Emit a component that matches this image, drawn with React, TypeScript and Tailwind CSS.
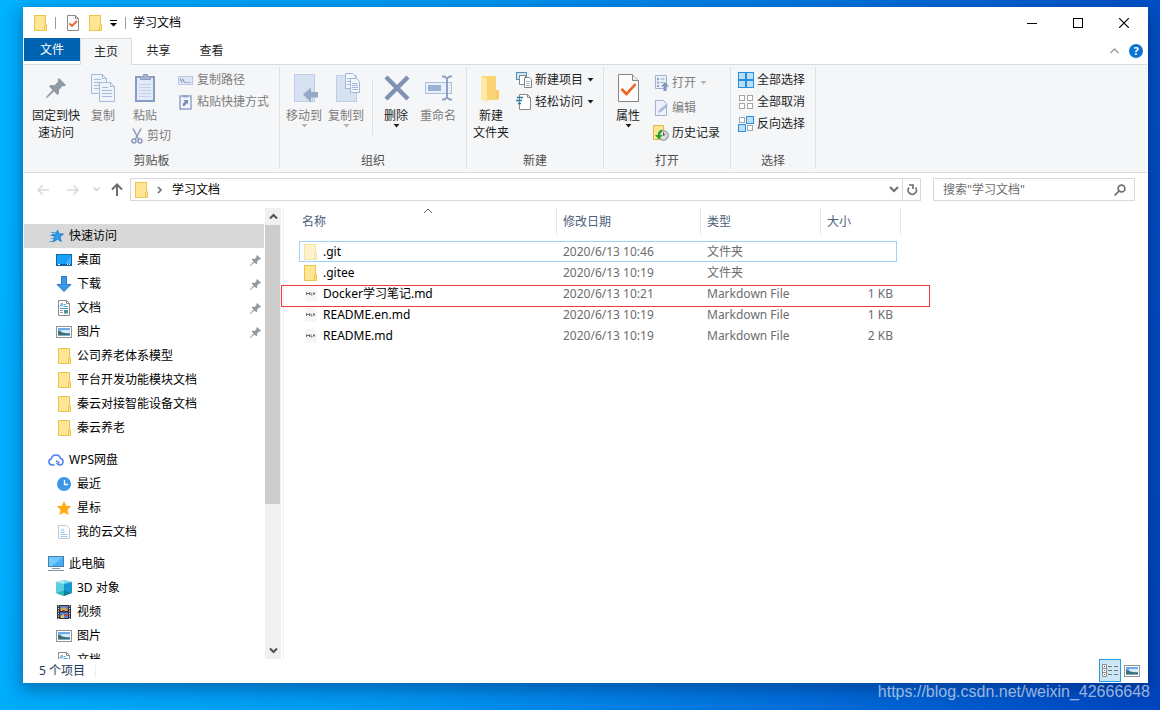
import { useState } from "react";
import type { ReactNode } from "react";

/* ---------- Icons ---------- */

function FolderIcon({ faded = false }: { faded?: boolean }) {
  return (
    <svg width="16" height="16" viewBox="0 0 16 16" className={faded ? "shrink-0 opacity-50" : "shrink-0"}>
      <rect x="2.5" y="0.5" width="11" height="15" fill="#ffe594" stroke="#eac54f" />
      <path d="M12.5 15.5v-4.8l1-1h1v5.8z" fill="#ffe48f" stroke="#eac54f" />
    </svg>
  );
}

function CheckDocIcon() {
  return (
    <svg width="16" height="16" viewBox="0 0 16 16">
      <path d="M2.5 .5h8l3 3v12h-11z" fill="#fbfbfb" stroke="#8a8a8a" />
      <path d="M10.500 .5v3h3" fill="none" stroke="#8a8a8a" />
      <path d="M4.500 8.500l2.500 2.500 5-5" fill="none" stroke="#e8622c" strokeWidth="1.800" />
    </svg>
  );
}

function PinIcon({ size }: { size: number }) {
  return (
    <svg width={size} height={size} viewBox="0 0 20 20" fill="#8f9aa3" className="shrink-0">
      <path d="M13 0l7 7-2 1.500-1.500-.5-3.500 4v3.500L11.500 17 8 13.500 1.500 19.500.5 20 0 19l6.500-7L3 8.500 4.500 7l4 .2L12 3.700l-.3-2z" />
    </svg>
  );
}

function Caret({ dim = false }: { dim?: boolean }) {
  return (
    <svg width="7" height="4" viewBox="0 0 7 4" fill={dim ? "#b4b4b4" : "#1e1e1e"} className="shrink-0">
      <path d="M.5 0h6l-3 3.500z" />
    </svg>
  );
}

function CopyIcon() {
  return (
    <svg width="26" height="30" viewBox="0 0 26 30" fill="#eef3fb" stroke="#a9bbd8">
      <path d="M1.500 1.500h11l4 4v15h-15z" />
      <path d="M12.500 1.500v4h4M4 6.500h7M4 9.500h9M4 12.500h6M4 15.500h5" fill="none" />
      <path d="M9.500 9.500h11l4 4v15h-15z" />
      <path d="M20.500 9.500v4h4M12 14.500h6M12 17.500h10M12 20.500h10M12 23.500h10" fill="none" />
    </svg>
  );
}

function PasteIcon() {
  return (
    <svg width="22" height="30" viewBox="0 0 22 30">
      <rect x="2" y="4" width="18" height="24" fill="#e3ebf8" stroke="#879cc3" strokeWidth="2" />
      <path d="M6.500 6.500v-3h3V1.500h4v2h3v3z" fill="#a7b4cf" stroke="#8c9dbd" />
      <path d="M5 11.500h12M5 14.500h12M5 17.500h12M5 20.500h12M5 23.500h12" stroke="#c3d2ea" />
    </svg>
  );
}

function ScissorsIcon() {
  return (
    <svg width="12" height="16" viewBox="0 0 12 16" fill="none" stroke="#8b9cba" strokeWidth="1.600">
      <path d="M2 .5l5.500 10.500M10 .5L4.500 11" />
      <circle cx="3" cy="13" r="2" />
      <circle cx="9" cy="13" r="2" />
    </svg>
  );
}

function PathIcon() {
  return (
    <svg width="16" height="16" viewBox="0 0 16 16">
      <rect x=".5" y="4.500" width="14" height="8" fill="#dce6f5" stroke="#b9c9e2" />
      <path d="M2 6.500l2 4M4.500 6.500l2 4" stroke="#6d82a8" />
      <path d="M7.500 10.500h1M9.500 10.500h1M11.500 10.500h1" stroke="#6d82a8" />
    </svg>
  );
}

function PasteShortcutIcon() {
  return (
    <svg width="16" height="16" viewBox="0 0 16 16">
      <rect x="2" y="2" width="11" height="13" fill="#f1f5fb" stroke="#91a5c8" strokeWidth="1.500" />
      <path d="M5 3V1.500h5V3z" fill="#91a5c8" stroke="#91a5c8" />
      <path d="M5 12V9.500l2-2L5.500 6H10v4.500L8.700 9 6.500 12z" fill="#7289b5" />
    </svg>
  );
}

function MoveToIcon() {
  return (
    <svg width="28" height="30" viewBox="0 0 28 30">
      <path d="M4.500 1.500h20v27h-20z" fill="#d6e2f2" stroke="#bccde5" />
      <path d="M22.500 18v10.500h2V18" fill="#e7effa" stroke="#bccde5" />
      <path d="M13 21.500l8-7v4.500h8v5.500h-8v5z" fill="#97a9c9" />
    </svg>
  );
}

function CopyToIcon() {
  return (
    <svg width="28" height="30" viewBox="0 0 28 30">
      <path d="M4.500 2.500h20v26h-20z" fill="#d6e2f2" stroke="#bccde5" />
      <g fill="#f3f7fc" stroke="#a3b6d4">
        <path d="M13.500 .5h7l3 3v12h-10z" />
        <path d="M15 5.500h4M15 8.500h3M15 11.500h3" />
        <path d="M18.500 5.500h6l3 3v11h-9z" />
        <path d="M20 10.500h6M20 12.500h6M20 14.500h6M20 16.500h6" />
      </g>
    </svg>
  );
}

function DeleteIcon() {
  return (
    <svg width="28" height="30" viewBox="0 0 28 30" stroke="#8092b3" strokeWidth="4.500">
      <path d="M4 4l22 22M26 4L4 26" />
    </svg>
  );
}

function RenameIcon() {
  return (
    <svg width="28" height="30" viewBox="0 0 28 30">
      <rect x="1.500" y="9.500" width="26" height="11" fill="#e8f0fb" stroke="#a9bddc" />
      <rect x="4" y="12" width="13" height="6" fill="#9cb0d1" />
      <path d="M18 3.500h2.500l2.500 2 2.500-2H28M18 26.500h2.500l2.500-2 2.500 2H28M23 5v20" fill="none" stroke="#8ea2c5" strokeWidth="2" />
    </svg>
  );
}

function NewFolderIcon() {
  return (
    <svg width="22" height="30" viewBox="0 0 22 30">
      <path d="M1 3h15v15h2v9H7z" fill="#fbd574" />
      <path d="M1 3l6 3v24l-6-4z" fill="#ffe9a8" />
      <path d="M16 17h3v9h-3z" fill="#f8cd63" />
    </svg>
  );
}

function NewItemIcon() {
  return (
    <svg width="16" height="16" viewBox="0 0 16 16">
      <rect x=".5" y=".5" width="10" height="7" fill="#cfe6f5" stroke="#4f8fb5" />
      <path d="M3.500 3.500h6v9h-6z" fill="#fff" stroke="#868686" />
      <path d="M8.500 5.500h5l2 2v8h-7z" fill="#fff" stroke="#868686" />
      <path d="M10 9.500h4M10 11.500h4M10 13.500h4" stroke="#9fb8cf" />
    </svg>
  );
}

function EasyAccessIcon() {
  return (
    <svg width="16" height="16" viewBox="0 0 16 16">
      <path d="M3.500 .5h8l3 3v12h-11z" fill="#fff" stroke="#8a8a8a" />
      <path d="M11.500 .5v3h3" fill="none" stroke="#8a8a8a" />
      <path d="M1 3.500h6M0 6.500h6M2 9.500h3" stroke="#2f76ab" strokeWidth="1.300" />
    </svg>
  );
}

function PropertiesIcon() {
  return (
    <svg width="22" height="30" viewBox="0 0 22 30">
      <path d="M1.500 1.500h14l6 6v21h-20z" fill="#fcfcfc" stroke="#858585" />
      <path d="M15.500 1.500v6h6" fill="#ececec" stroke="#858585" />
      <path d="M4.500 16l5 5 9-10" fill="none" stroke="#f0601e" strokeWidth="2.600" />
    </svg>
  );
}

function OpenIcon() {
  return (
    <svg width="16" height="16" viewBox="0 0 16 16">
      <path d="M2.500 .5h11v13h-11z" fill="#edf2fa" stroke="#9fb2d0" />
      <path d="M4 3h2v2H4zM4 6.500h2v2H4zM4 10h2v2H4z" fill="#8ea3c6" />
      <path d="M7.500 4h4M7.500 7.500h3" stroke="#8ea3c6" />
      <path d="M12 7l4 4.500h-2.500V16h-3v-4.500H8z" fill="#8196bd" />
    </svg>
  );
}

function EditIcon() {
  return (
    <svg width="16" height="16" viewBox="0 0 16 16">
      <path d="M2.500 .5h8l3 3v12h-11z" fill="#edf2fa" stroke="#9fb2d0" />
      <path d="M5 13l1-3 7-6 2 2-7 6z" fill="#a9bbda" />
    </svg>
  );
}

function HistoryIcon() {
  return (
    <svg width="16" height="16" viewBox="0 0 16 16">
      <path d="M.5 .5h10v14H.5z" fill="#ffe594" stroke="#e0b73c" />
      <circle cx="10.500" cy="10.500" r="4.800" fill="#dedede" stroke="#808080" />
      <path d="M10.500 7.500v3l2-1.500M8 10.500h1M13 12.500l-.5-.5" fill="none" stroke="#555" />
      <path d="M9 4.500C6 5 4.500 7.500 4.800 10H2l4 4.500L9.500 10H7.200C7 8.500 7.800 7.500 9 7z" fill="#27a327" />
    </svg>
  );
}

// Four tiles; each entry tells whether that tile is filled
function TilesIcon({ filled }: { filled: boolean[] }) {
  const spots = [
    [0.5, 0.5],
    [8.5, 0.5],
    [0.5, 8.5],
    [8.5, 8.5],
  ];
  return (
    <svg width="16" height="16" viewBox="0 0 16 16">
      {spots.map(([x, y], i) =>
        filled[i] ? (
          <rect key={i} x={x} y={y} width="7" height="7" fill="#b9def7" stroke="#2c8ee0" />
        ) : (
          <rect key={i} x={x + 1} y={y + 1} width="5" height="5" fill="#fff" stroke="#a5a5a5" />
        ),
      )}
    </svg>
  );
}

function QuickStarIcon() {
  return (
    <svg width="16" height="16" viewBox="0 0 16 16">
      <path d="M3 4.500h5M2 7.500h5M3 10.500h4M1.500 13.500h4" stroke="#4aa3df" />
      <path d="M9.500 2l1.500 3.800 4.500.2-3.500 2.900 1.400 4.600-4-2.200L5 14l1.500-4.600L4 6.300l4-.3z" fill="#2f9ae8" stroke="#1878c4" strokeWidth=".8" />
    </svg>
  );
}

function DesktopIcon() {
  return (
    <svg width="16" height="16" viewBox="0 0 16 16">
      <rect x=".5" y="2.500" width="15" height="11" fill="#18a0fb" stroke="#0d68b0" />
      <path d="M9 13L15 4v9z" fill="#45b4ff" />
      <path d="M1 12.500h14" stroke="#0d5b9e" />
      <path d="M2 12.500h2M11 12.500h1M13 12.500h1" stroke="#fff" />
    </svg>
  );
}

function DownloadIcon() {
  return (
    <svg width="16" height="16" viewBox="0 0 16 16">
      <path d="M5.500 .5h5v8h4.500L8 15.500 1 8.500h4.500z" fill="#3b97e8" stroke="#2a79c2" />
    </svg>
  );
}

function DocumentIcon() {
  return (
    <svg width="16" height="16" viewBox="0 0 16 16">
      <path d="M2.500 .5h8l3 3v12h-11z" fill="#fff" stroke="#8a8a8a" />
      <path d="M10.500 .5v3h3" fill="none" stroke="#8a8a8a" />
      <path d="M4 6.500l2-3.500v3.500M7.500 4.500h2M7.500 6.500h4M4 8.500h8" fill="none" stroke="#3b9ad2" />
      <path d="M4 10.500h3M4 12.500h3" stroke="#9a9a9a" />
      <path d="M8 10h4v3.500H8z" fill="#4f8f9a" />
    </svg>
  );
}

function PictureIcon() {
  return (
    <svg width="16" height="16" viewBox="0 0 16 16">
      <rect x=".5" y="2.500" width="15" height="11" fill="#fff" stroke="#949494" />
      <path d="M2 4h12v8H2z" fill="#6fa9ee" />
      <path d="M5 6h9v3H5z" fill="#d5e9f8" />
      <path d="M2 7c3 .5 5 2.500 12 2.500V12H2z" fill="#3f6f6c" />
      <path d="M2 11h12v1H2z" fill="#7fa9c8" />
    </svg>
  );
}

function CloudIcon() {
  return (
    <svg width="16" height="16" viewBox="0 0 16 16" fill="none" stroke="#4a7df0" strokeWidth="1.500">
      <path d="M6.500 13H4a3.200 3.200 0 0 1-.6-6.300A4.700 4.700 0 0 1 12.500 6.500 3.300 3.300 0 0 1 12 13c-2 0-2.500-1-3.500-2" />
      <path d="M8 9.500c1.500-.5 3 .5 3 2" />
    </svg>
  );
}

function ClockIcon() {
  return (
    <svg width="16" height="16" viewBox="0 0 16 16">
      <circle cx="8" cy="8" r="7" fill="#3c97e8" />
      <path d="M8.500 4v4.500H12" fill="none" stroke="#fff" strokeWidth="1.300" />
    </svg>
  );
}

function StarIcon() {
  return (
    <svg width="16" height="16" viewBox="0 0 16 16">
      <path d="M8 1l2.200 4.700 5 .6-3.700 3.500 1 5.200L8 12.500 3.500 15l1-5.200L.8 6.300l5-.6z" fill="#ffac13" />
    </svg>
  );
}

function CloudDocIcon() {
  return (
    <svg width="16" height="16" viewBox="0 0 16 16">
      <path d="M2.500 1.500h8l3 3v10h-11z" fill="#fff" stroke="#c4c8cc" />
      <path d="M5 7.500l1.500-3 1.500 3M4.500 8.500h4M4.500 10.500h7M4.500 12.500h7" fill="none" stroke="#9cc8f2" />
    </svg>
  );
}

function ComputerIcon() {
  return (
    <svg width="16" height="16" viewBox="0 0 16 16">
      <rect x=".5" y=".5" width="15" height="10" fill="#45aef5" stroke="#4380ab" />
      <path d="M1 1h14L4 10H1z" fill="#74c6fb" />
      <path d="M4 12.500h8M0 14.500h16" stroke="#8293a8" />
    </svg>
  );
}

function CubeIcon() {
  return (
    <svg width="16" height="16" viewBox="0 0 16 16">
      <path d="M0 2l8-2 8 2v11l-8 3-8-3z" fill="#59cfdd" />
      <path d="M0 2l8-2v4z" fill="#a9eaee" />
      <path d="M8 0l8 2-8 2z" fill="#7ddbe4" />
      <path d="M8 4l8-2v11l-8-2.500z" fill="#1599d3" />
      <path d="M8 10.500l8 2.500-8 3z" fill="#0d7f96" />
      <path d="M0 13l8-2.500V16z" fill="#2fb4b8" />
    </svg>
  );
}

function VideoIcon() {
  return (
    <svg width="16" height="16" viewBox="0 0 16 16">
      <path d="M1 1h14v14H1z" fill="#353535" />
      <path d="M4 2h8v5H4zM4 8.500h8v5.500H4z" fill="#527fe0" />
      <path d="M5 4l3-1 3 2v2H5z" fill="#d8a63b" />
      <path d="M6 6h3v1H6zM8 10h3v2H8z" fill="#cd4631" />
      <path d="M5 12l3-2v4H5z" fill="#e4c149" />
      <path d="M2.500 1.500v14M13.500 1.500v14" stroke="#e9e9e9" strokeDasharray="1.200 1.300" />
    </svg>
  );
}

function MarkdownIcon() {
  return (
    <svg width="16" height="16" viewBox="0 0 16 16" className="shrink-0">
      <path d="M3 1h9l3 3v11H3z" fill="#f6f6f6" />
      <path d="M4.500 9V6.500L6 8l1.500-1.500V9M9 6.500V9h1.500M12 6v3M11 7.500h2" fill="none" stroke="#707070" />
    </svg>
  );
}

/* ---------- Ribbon ---------- */

function RibbonGroup({ title, className, children }: { title: string; className: string; children: ReactNode }) {
  return (
    <section className="flex h-[102px] shrink-0 flex-col border-r border-[#e0e1e3]">
      <div className={`flex flex-1 ${className}`}>{children}</div>
      <h2 className="text-center leading-[17px] text-[#505050]">{title}</h2>
    </section>
  );
}

interface BigButtonProps {
  icon: ReactNode;
  lines: string[];
  caret?: boolean;
  dim?: boolean;
  className?: string;
}

function BigButton({ icon, lines, caret, dim, className = "w-[42px]" }: BigButtonProps) {
  return (
    <button
      type="button"
      className={`flex shrink-0 flex-col items-center self-start pt-[6px] leading-[17px] whitespace-nowrap ${className} ${
        dim ? "text-[#7d7d7d]" : "text-[#1e1e1e]"
      }`}
    >
      <span className="flex h-[30px] items-center justify-center">{icon}</span>
      <span className="mt-1 flex flex-col">
        {lines.map((line) => (
          <span key={line}>{line}</span>
        ))}
      </span>
      {caret && <Caret dim={dim} />}
    </button>
  );
}

interface SmallButtonProps {
  icon: ReactNode;
  label: string;
  caret?: boolean;
  dim?: boolean;
  className?: string;
}

function SmallButton({ icon, label, caret, dim, className = "h-[22px] gap-[3px]" }: SmallButtonProps) {
  return (
    <button
      type="button"
      className={`flex items-center whitespace-nowrap ${className} ${dim ? "text-[#7d7d7d]" : "text-[#1e1e1e]"}`}
    >
      {icon}
      <span>{label}</span>
      {caret && (
        <span className="pl-px">
          <Caret dim={dim} />
        </span>
      )}
    </button>
  );
}

function Ribbon() {
  return (
    <div className="flex overflow-hidden border-b border-[#dadbdc] bg-[#f5f6f7] pt-[2px] pb-[3px]">
      <RibbonGroup title="剪贴板" className="w-[255px] pl-[6px]">
        <BigButton icon={<PinIcon size={20} />} lines={["固定到快", "速访问"]} className="w-[52px] text-center" />
        <BigButton icon={<CopyIcon />} lines={["复制"]} dim />
        <div className="ml-[7px] w-[47px]">
          <BigButton icon={<PasteIcon />} lines={["粘贴"]} dim className="w-7" />
          <SmallButton icon={<ScissorsIcon />} label="剪切" dim className="h-6 gap-1" />
        </div>
        <div className="pt-[2px]">
          <SmallButton icon={<PathIcon />} label="复制路径" dim />
          <SmallButton icon={<PasteShortcutIcon />} label="粘贴快捷方式" dim />
        </div>
      </RibbonGroup>

      <RibbonGroup title="组织" className="w-[186px] pl-[3px]">
        <BigButton icon={<MoveToIcon />} lines={["移动到"]} caret dim />
        <BigButton icon={<CopyToIcon />} lines={["复制到"]} caret dim />
        <div className="mt-[13px] mr-[2px] ml-[5px] h-[55px] w-px bg-[#e0e1e3]" />
        <BigButton icon={<DeleteIcon />} lines={["删除"]} caret />
        <BigButton icon={<RenameIcon />} lines={["重命名"]} dim />
      </RibbonGroup>

      <RibbonGroup title="新建" className="w-[136px] pl-[3px]">
        <BigButton icon={<NewFolderIcon />} lines={["新建", "文件夹"]} className="w-[42px] text-center" />
        <div className="ml-1 pt-[2px]">
          <SmallButton icon={<NewItemIcon />} label="新建项目" caret />
          <SmallButton icon={<EasyAccessIcon />} label="轻松访问" caret />
        </div>
      </RibbonGroup>

      <RibbonGroup title="打开" className="w-[126px] pl-[3px]">
        <BigButton icon={<PropertiesIcon />} lines={["属性"]} caret />
        <div className="ml-1 pt-[3px]">
          <SmallButton icon={<OpenIcon />} label="打开" caret dim className="h-[25px] gap-[3px]" />
          <SmallButton icon={<EditIcon />} label="编辑" dim className="h-[25px] gap-[3px]" />
          <SmallButton icon={<HistoryIcon />} label="历史记录" className="h-[25px] gap-[3px]" />
        </div>
      </RibbonGroup>

      <RibbonGroup title="选择" className="w-[84px] pl-[7px]">
        <div className="pt-[2px]">
          <SmallButton icon={<TilesIcon filled={[true, true, true, true]} />} label="全部选择" />
          <SmallButton icon={<TilesIcon filled={[false, false, false, false]} />} label="全部取消" />
          <SmallButton icon={<TilesIcon filled={[false, true, true, false]} />} label="反向选择" />
        </div>
      </RibbonGroup>
    </div>
  );
}

/* ---------- Title bar, tabs, address ---------- */

function TitleBar() {
  return (
    <header className="flex h-[30px] shrink-0 items-center pl-2">
      <FolderIcon />
      <span className="ml-[7px] h-3 w-px bg-[#9a9a9a]" />
      <button type="button" aria-label="属性" className="ml-[9px]">
        <CheckDocIcon />
      </button>
      <button type="button" aria-label="新建文件夹" className="ml-[6px]">
        <FolderIcon />
      </button>
      <button type="button" aria-label="自定义快速访问工具栏" className="ml-[7px]">
        <svg width="7" height="8" viewBox="0 0 7 8">
          <path d="M0 1.500h7" stroke="#000" />
          <path d="M0 4h7L3.500 7.500z" />
        </svg>
      </button>
      <span className="ml-2 h-3 w-px bg-[#9a9a9a]" />
      <h1 className="ml-[7px] flex-1 text-black">学习文档</h1>
      <button type="button" aria-label="最小化" className="flex h-full w-[46px] items-center justify-center">
        <svg width="10" height="10" viewBox="0 0 10 10" stroke="#000">
          <path d="M0 5.500h10" />
        </svg>
      </button>
      <button type="button" aria-label="最大化" className="flex h-full w-[46px] items-center justify-center">
        <svg width="10" height="10" viewBox="0 0 10 10" fill="none" stroke="#000">
          <rect x=".5" y=".5" width="9" height="9" />
        </svg>
      </button>
      <button type="button" aria-label="关闭" className="flex h-full w-[46px] items-center justify-center">
        <svg width="10" height="10" viewBox="0 0 10 10" stroke="#000" strokeWidth="1.200">
          <path d="M0 0l10 10M10 0L0 10" />
        </svg>
      </button>
    </header>
  );
}

function TabBar() {
  return (
    <div className="flex h-[27px] shrink-0 items-stretch border-b border-[#dadbdc]">
      <button type="button" className="h-[23px] w-14 bg-[#0063b1] text-white">
        文件
      </button>
      <button type="button" className="-mb-px w-[52px] border border-b-0 border-[#dadbdc] bg-[#f5f6f7] text-[#262626]">
        主页
      </button>
      <button type="button" className="w-[53px] text-[#262626]">
        共享
      </button>
      <button type="button" className="w-[53px] text-[#262626]">
        查看
      </button>
      <div className="flex flex-1 items-center justify-end gap-[10px] pr-1">
        <button type="button" aria-label="最小化功能区">
          <svg width="9" height="6" viewBox="0 0 9 6" fill="none" stroke="#9a9a9a" strokeWidth="1.300">
            <path d="M.5 5l4-4 4 4" />
          </svg>
        </button>
        <button
          type="button"
          aria-label="帮助"
          className="flex size-[14px] items-center justify-center rounded-full bg-[#0a74d0] text-[11px] font-bold text-white"
        >
          ?
        </button>
      </div>
    </div>
  );
}

function AddressBar() {
  const [query, setQuery] = useState("");

  return (
    <div className="flex h-[35px] shrink-0 items-start pt-[5px] pr-3 pl-3">
      <div className="flex h-[23px] w-[94px] shrink-0 items-center">
        <button type="button" aria-label="后退" className="w-[30px]">
          <svg width="14" height="12" viewBox="0 0 14 12" fill="none" stroke="#d8d8d8" strokeWidth="1.600">
            <path d="M13 6H2M6.500 1.500L2 6l4.500 4.500" />
          </svg>
        </button>
        <button type="button" aria-label="前进" className="w-[26px]">
          <svg width="14" height="12" viewBox="0 0 14 12" fill="none" stroke="#d8d8d8" strokeWidth="1.600">
            <path d="M1 6h11M7.500 1.500L12 6l-4.500 4.500" />
          </svg>
        </button>
        <button type="button" aria-label="最近浏览的位置" className="w-[18px]">
          <svg width="7" height="5" viewBox="0 0 7 5" fill="none" stroke="#cfcfcf" strokeWidth="1.500" className="ml-px">
            <path d="M.5 .5l3 3 3-3" />
          </svg>
        </button>
        <button type="button" aria-label="上移">
          <svg width="14" height="13" viewBox="0 0 14 13" fill="none" stroke="#6e6e6e" strokeWidth="2">
            <path d="M7 13V2M2 6.500l5-5 5 5" />
          </svg>
        </button>
      </div>

      <div className="flex h-[23px] flex-1 items-center border border-[#d9d9d9] pl-[2px]">
        <FolderIcon />
        <svg width="6" height="8" viewBox="0 0 6 8" fill="none" stroke="#6a6a6a" strokeWidth="1.600" className="ml-2">
          <path d="M1 1l3 3-3 3" />
        </svg>
        <a href="#docs" className="ml-[9px] flex-1 text-black">
          学习文档
        </a>
        <button type="button" aria-label="以前的位置" className="flex w-4 justify-center">
          <svg width="10" height="7" viewBox="0 0 10 7" fill="none" stroke="#707070" strokeWidth="2">
            <path d="M1 1l4 4 4-4" />
          </svg>
        </button>
        <button type="button" aria-label="刷新" className="flex h-full w-[18px] items-center justify-center border-l border-[#d9d9d9]">
          <svg width="12" height="12" viewBox="0 0 12 12" fill="none" stroke="#6e6e6e" strokeWidth="1.700">
            <path d="M9.500 3.500a4.200 4.200 0 1 1-6.500 0M3 1h4v4" />
          </svg>
        </button>
      </div>

      <div className="ml-3 flex h-[23px] w-[202px] items-center border border-[#d9d9d9] pr-2 pl-[9px]">
        <input
          type="text"
          aria-label="搜索"
          value={query}
          onChange={(e) => setQuery(e.target.value)}
          placeholder={'搜索"学习文档"'}
          className="min-w-0 flex-1 bg-transparent outline-none placeholder:text-[#6d6d6d]"
        />
        <svg width="12" height="12" viewBox="0 0 12 12" fill="none" stroke="#707070" strokeWidth="1.700">
          <circle cx="7.500" cy="4.500" r="3.400" />
          <path d="M5 7L.7 11.300" />
        </svg>
      </div>
    </div>
  );
}

/* ---------- Navigation pane ---------- */

interface NavEntry {
  label: string;
  icon: ReactNode;
  root?: boolean;
  pinned?: boolean;
  selected?: boolean;
}

const NAV_SECTIONS: NavEntry[][] = [
  [
    { label: "快速访问", icon: <QuickStarIcon />, root: true, selected: true },
    { label: "桌面", icon: <DesktopIcon />, pinned: true },
    { label: "下载", icon: <DownloadIcon />, pinned: true },
    { label: "文档", icon: <DocumentIcon />, pinned: true },
    { label: "图片", icon: <PictureIcon />, pinned: true },
    { label: "公司养老体系模型", icon: <FolderIcon /> },
    { label: "平台开发功能模块文档", icon: <FolderIcon /> },
    { label: "秦云对接智能设备文档", icon: <FolderIcon /> },
    { label: "秦云养老", icon: <FolderIcon /> },
  ],
  [
    { label: "WPS网盘", icon: <CloudIcon />, root: true },
    { label: "最近", icon: <ClockIcon /> },
    { label: "星标", icon: <StarIcon /> },
    { label: "我的云文档", icon: <CloudDocIcon /> },
  ],
  [
    { label: "此电脑", icon: <ComputerIcon />, root: true },
    { label: "3D 对象", icon: <CubeIcon /> },
    { label: "视频", icon: <VideoIcon /> },
    { label: "图片", icon: <PictureIcon /> },
    { label: "文档", icon: <DocumentIcon /> },
  ],
];

function NavPane() {
  return (
    <nav className="w-60 shrink-0 overflow-hidden pt-4">
      {NAV_SECTIONS.map((section) => (
        <ul key={section[0].label} className="mb-2">
          {section.map((item) => (
            <li key={item.label}>
              <button
                type="button"
                className={`flex h-6 w-full items-center gap-[5px] pr-[3px] text-left text-black ${
                  item.root ? "pl-6" : "pl-8"
                } ${item.selected ? "bg-[#d9d9d9]" : ""}`}
              >
                {item.icon}
                <span className="flex-1">{item.label}</span>
                {item.pinned && <PinIcon size={11} />}
              </button>
            </li>
          ))}
        </ul>
      ))}
    </nav>
  );
}

function ScrollBar() {
  return (
    <div className="ml-px flex w-4 shrink-0 flex-col bg-[#f0f0f0]">
      <button type="button" aria-label="向上滚动" className="flex h-[17px] items-center justify-center">
        <svg width="9" height="7" viewBox="0 0 9 7" fill="none" stroke="#505050" strokeWidth="2">
          <path d="M1 5.500L4.500 2 8 5.500" />
        </svg>
      </button>
      <div className="flex-1">
        <div className="h-[67%] w-[15px] bg-[#cdcdcd]" />
      </div>
      <button type="button" aria-label="向下滚动" className="flex h-[17px] items-center justify-center">
        <svg width="9" height="7" viewBox="0 0 9 7" fill="none" stroke="#505050" strokeWidth="2">
          <path d="M1 1.500L4.500 5 8 1.500" />
        </svg>
      </button>
    </div>
  );
}

/* ---------- File list ---------- */

interface FileEntry {
  name: string;
  date: string;
  type: string;
  size: string;
  kind: "hidden" | "folder" | "markdown";
  marked?: boolean;
}

const FILES: FileEntry[] = [
  { name: ".git", date: "2020/6/13 10:46", type: "文件夹", size: "", kind: "hidden" },
  { name: ".gitee", date: "2020/6/13 10:19", type: "文件夹", size: "", kind: "folder" },
  { name: "Docker学习笔记.md", date: "2020/6/13 10:21", type: "Markdown File", size: "1 KB", kind: "markdown", marked: true },
  { name: "README.en.md", date: "2020/6/13 10:19", type: "Markdown File", size: "1 KB", kind: "markdown" },
  { name: "README.md", date: "2020/6/13 10:19", type: "Markdown File", size: "2 KB", kind: "markdown" },
];

function FileTable() {
  return (
    <table className="w-[598px] table-fixed border-separate border-spacing-0 text-left">
      <colgroup>
        <col />
        <col className="w-36" />
        <col className="w-[120px]" />
        <col className="w-[76px]" />
      </colgroup>
      <thead>
        <tr className="h-[27px] text-[#4c607a]">
          <th scope="col" className="relative border-r border-[#e5e5e5] pl-[3px] font-normal">
            名称
            <svg
              width="9"
              height="6"
              viewBox="0 0 9 6"
              fill="none"
              stroke="#5f5f5f"
              className="absolute top-0 left-1/2 -translate-x-1/2"
            >
              <path d="M.5 5l4-4 4 4" />
            </svg>
          </th>
          <th scope="col" className="border-r border-[#e5e5e5] pl-[6px] font-normal">修改日期</th>
          <th scope="col" className="border-r border-[#e5e5e5] pl-[6px] font-normal">类型</th>
          <th scope="col" className="relative pl-[6px] font-normal">
            大小
            <span className="absolute top-0 -right-1 h-full w-px bg-[#e5e5e5]" />
          </th>
        </tr>
        <tr aria-hidden="true" className="h-[6px]" />
      </thead>
      <tbody>
        {FILES.map((file) => (
          <tr
            key={file.name}
            className={`relative h-[21px] text-[#6d6d6d] ${
              file.kind === "hidden" ? "outline-1 -outline-offset-1 outline-[#99d1ff]" : ""
            }`}
          >
            <td className="p-0 pl-[3px]">
              <div className="flex items-center gap-[5px] text-black">
                {file.kind === "markdown" ? <MarkdownIcon /> : <FolderIcon faded={file.kind === "hidden"} />}
                {file.name}
              </div>
              {file.marked && (
                <span className="pointer-events-none absolute top-[2px] -right-[33px] -left-[18px] h-[22px] border border-[#f23c3c]" />
              )}
            </td>
            <td className="p-0 pl-[6px]">{file.date}</td>
            <td className="p-0 pl-[6px]">{file.type}</td>
            <td className="p-0 pr-1 text-right">{file.size}</td>
          </tr>
        ))}
      </tbody>
    </table>
  );
}

function StatusBar() {
  return (
    <footer className="flex h-[23px] shrink-0 items-center pr-[7px] pl-[15px] text-[#1e395b]">
      <span>5 个项目</span>
      <span className="ml-[10px] h-3 w-px bg-[#ededed]" />
      <div className="ml-auto flex h-full items-center gap-[3px]">
        <button
          type="button"
          aria-label="详细信息"
          className="flex h-[23px] w-[22px] items-center justify-center border border-[#26a0da] bg-[#cce8f6]"
        >
          <svg width="16" height="13" viewBox="0 0 16 13" fill="none">
            <path d="M.5 .5h4v12h-4zM.5 4.500h4M.5 8.500h4" fill="#fff" stroke="#8a8a8a" />
            <path d="M6 2.500h4M12 2.500h4M6 6.500h4M12 6.500h4M6 10.500h4M12 10.500h4" stroke="#777" />
            <path d="M2 2.500h1" stroke="#444" />
            <path d="M2 6.500h1" stroke="#2c7be0" />
            <path d="M2 10.500h1" stroke="#d33" />
          </svg>
        </button>
        <button type="button" aria-label="大图标">
          <PictureIcon />
        </button>
      </div>
    </footer>
  );
}

export default function App() {
  return (
    <div className="flex h-screen flex-col bg-[linear-gradient(98deg,#00b2ff_0%,#0098f2_38%,#0070dc_70%,#0044be_100%)] pt-[7px] pr-3 pl-[23px] font-['Noto_Sans','Noto_Sans_CJK_SC',sans-serif] text-[12px] leading-4">
      <main className="flex min-h-0 flex-1 flex-col border border-white bg-white shadow-[0_5px_16px_2px_rgba(0,25,80,0.4)]">
        <TitleBar />
        <TabBar />
        <Ribbon />
        <AddressBar />
        <div className="flex min-h-0 flex-1">
          <NavPane />
          <ScrollBar />
          <div className="ml-[2px] min-w-0 flex-1 border-l border-[#f0f0f0] pl-[15px]">
            <FileTable />
          </div>
        </div>
        <StatusBar />
      </main>
      <p className="-mr-[2px] h-[27px] text-right font-['Liberation_Sans',sans-serif] text-[16px] leading-[17px] text-white/60">
        https://blog.csdn.net/weixin_42666648
      </p>
    </div>
  );
}
